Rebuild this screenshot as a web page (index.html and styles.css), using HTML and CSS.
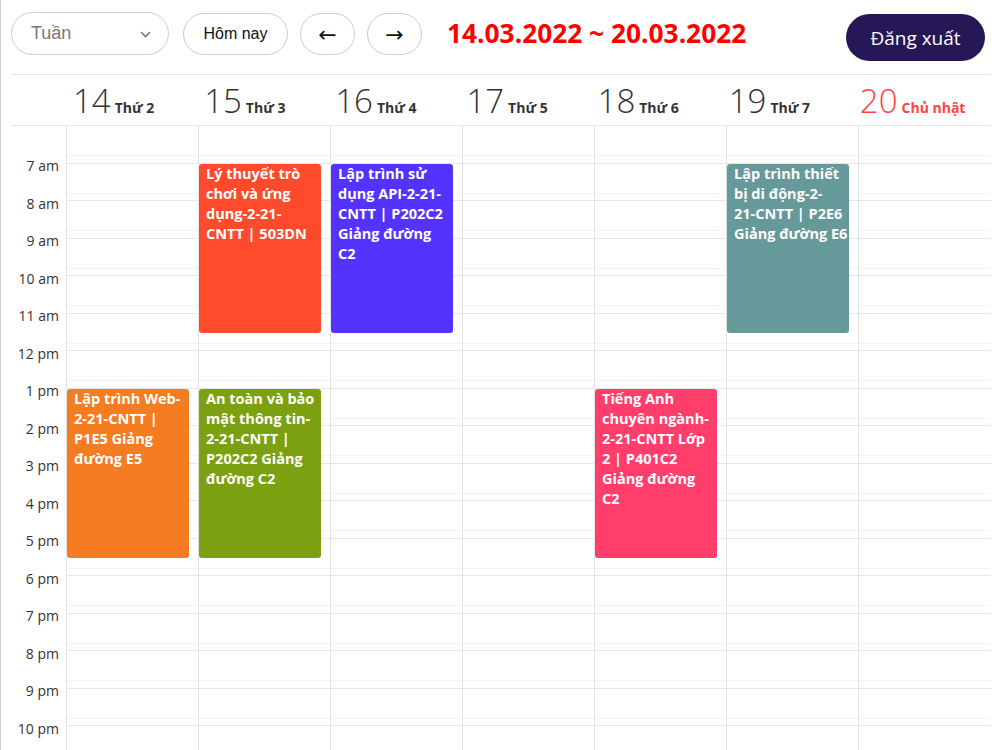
FILE: index.html
```html
<!DOCTYPE html>
<html lang="vi">
<head>
<meta charset="utf-8">
<title>Lịch học</title>
<link rel="stylesheet" href="styles.css">
</head>
<body>
<div class="page">
  <header class="toolbar">
    <div class="select">
      <span class="select-text">Tuần</span>
      <svg class="chev" width="11" height="7" viewBox="0 0 11 7"><path d="M1 1 L5.5 5.5 L10 1" fill="none" stroke="#777" stroke-width="1.6"/></svg>
    </div>
    <button class="btn btn-today">Hôm nay</button>
    <button class="btn btn-arrow">←</button>
    <button class="btn btn-arrow">→</button>
    <h1 class="range">14.03.2022 ~ 20.03.2022</h1>
    <button class="logout">Đăng xuất</button>
  </header>

  <div class="dayhead">
    <div></div>
    <div class="dh"><span class="num">14</span><span class="dn">Thứ 2</span></div>
    <div class="dh"><span class="num">15</span><span class="dn">Thứ 3</span></div>
    <div class="dh"><span class="num">16</span><span class="dn">Thứ 4</span></div>
    <div class="dh"><span class="num">17</span><span class="dn">Thứ 5</span></div>
    <div class="dh"><span class="num">18</span><span class="dn">Thứ 6</span></div>
    <div class="dh"><span class="num">19</span><span class="dn">Thứ 7</span></div>
    <div class="dh sun"><span class="num">20</span><span class="dn">Chủ nhật</span></div>
  </div>

  <div class="grid">
    <div class="times">
      <div class="tl">7 am</div>
      <div class="tl">8 am</div>
      <div class="tl">9 am</div>
      <div class="tl">10 am</div>
      <div class="tl">11 am</div>
      <div class="tl">12 pm</div>
      <div class="tl">1 pm</div>
      <div class="tl">2 pm</div>
      <div class="tl">3 pm</div>
      <div class="tl">4 pm</div>
      <div class="tl">5 pm</div>
      <div class="tl">6 pm</div>
      <div class="tl">7 pm</div>
      <div class="tl">8 pm</div>
      <div class="tl">9 pm</div>
      <div class="tl">10 pm</div>
    </div>
    <div class="days">
      <div class="col">
        <div class="ev orange" style="top:263px;height:169px">Lập trình Web-<br>2-21-CNTT |<br>P1E5 Giảng<br>đường E5</div>
      </div>
      <div class="col">
        <div class="ev red" style="top:38px;height:169px">Lý thuyết trò<br>chơi và ứng<br>dụng-2-21-<br>CNTT | 503DN</div>
        <div class="ev olive" style="top:263px;height:169px">An toàn và bảo<br>mật thông tin-<br>2-21-CNTT |<br>P202C2 Giảng<br>đường C2</div>
      </div>
      <div class="col">
        <div class="ev purple" style="top:38px;height:169px">Lập trình sử<br>dụng API-2-21-<br>CNTT | P202C2<br>Giảng đường<br>C2</div>
      </div>
      <div class="col"></div>
      <div class="col">
        <div class="ev pink" style="top:263px;height:169px">Tiếng Anh<br>chuyên ngành-<br>2-21-CNTT Lớp<br>2 | P401C2<br>Giảng đường<br>C2</div>
      </div>
      <div class="col">
        <div class="ev teal" style="top:38px;height:169px">Lập trình thiết<br>bị di động-2-<br>21-CNTT | P2E6<br>Giảng đường E6</div>
      </div>
      <div class="col"></div>
    </div>
  </div>
</div>
</body>
</html>
```

FILE: styles.css
```css
html, body {
  margin: 0;
  padding: 0;
  overflow: hidden;
  background: #fff;
}
body {
  border-left: 1px solid #cfcfcf;
  height: 750px;
  box-sizing: border-box;
}
.page {
  padding: 0 7px 0 10px;
}

/* toolbar */
.toolbar {
  display: flex;
  align-items: flex-start;
  padding-top: 12px;
  height: 62px;
  border-bottom: 1px solid #e6e6e6;
}
.select {
  width: 158px;
  height: 43px;
  box-sizing: border-box;
  border: 1px solid #cccccc;
  border-radius: 22px;
  display: flex;
  align-items: center;
  padding: 0 17px 0 19px;
  font-family: "Liberation Sans", Arial, sans-serif;
  font-size: 18px;
  color: #777;
}
.select-text { flex: 1; }
.chev { margin-top: 1px; }
.btn {
  height: 42px;
  margin-top: 1px;
  box-sizing: border-box;
  border: 1px solid #cccccc;
  border-radius: 21px;
  background: #fff;
  font-family: "Liberation Sans", Arial, sans-serif;
  font-size: 16px;
  color: #111;
  padding: 0;
}
.btn-today {
  width: 105px;
  margin-left: 14px;
}
.btn-arrow {
  width: 55px;
  margin-left: 12px;
  font-family: "DejaVu Sans", "Liberation Sans", sans-serif;
  font-size: 22px;
  line-height: 1;
  padding-top: 2px;
}
.range {
  margin: 3px 0 0 25px;
  font-family: "Open Sans", "Noto Sans", sans-serif;
  font-weight: 700;
  font-size: 26.3px;
  line-height: 36px;
  color: #ff0000;
}
.logout {
  margin: 2px 6px 0 auto;
  width: 139px;
  height: 47px;
  border: none;
  border-radius: 24px;
  background: #261857;
  color: #fff;
  font-family: "Open Sans", "Noto Sans", sans-serif;
  font-size: 19px;
  padding: 0;
}

/* day header */
.dayhead {
  display: grid;
  grid-template-columns: 62px repeat(7, 1fr);
  height: 50px;
  border-bottom: 1px solid #e6e6e6;
}
.dh {
  display: flex;
  align-items: baseline;
  padding-top: 6px;
  color: #333;
  font-family: "Open Sans", "Noto Sans", sans-serif;
}
.num {
  font-weight: 300;
  font-size: 33px;
  line-height: 40px;
}
.dn {
  font-weight: 700;
  font-size: 14px;
  margin-left: 4px;
}
.sun { color: #ff4343; }

/* grid */
.grid {
  display: grid;
  grid-template-columns: 55px 1fr;
}
.times {
  padding-top: 21px;
  font-family: "Open Sans", "Noto Sans", sans-serif;
  font-size: 14px;
  color: #333;
}
.tl {
  height: 37.5px;
  line-height: 37.5px;
  text-align: right;
  padding-right: 7px;
}
.days {
  display: grid;
  grid-template-columns: repeat(7, 132px);
  height: 640px;
  background-image: repeating-linear-gradient(to bottom,
    transparent 0, transparent 29px,
    #f3f3f3 29px, #f3f3f3 30px,
    transparent 30px, transparent 37px,
    #e6e6e6 37px, #e6e6e6 38px,
    transparent 38px, transparent 67px,
    #f3f3f3 67px, #f3f3f3 68px,
    transparent 68px, transparent 74px,
    #e6e6e6 74px, #e6e6e6 75px);
}
.col {
  position: relative;
  border-left: 1px solid #e2e2e2;
}

/* events */
.ev {
  position: absolute;
  left: 0;
  width: 122px;
  box-sizing: border-box;
  padding: 0 0 0 7px;
  border-radius: 3px;
  color: #fff;
  font-family: "Open Sans", "Noto Sans", sans-serif;
  font-weight: 700;
  font-size: 14.5px;
  line-height: 20px;
  white-space: nowrap;
  overflow: hidden;
}
.red { background: #ff4b2b; }
.purple { background: #5533ff; }
.teal { background: #669999; }
.orange { background: #f57c20; }
.olive { background: #7ba010; }
.pink { background: #ff3e6b; }
```
